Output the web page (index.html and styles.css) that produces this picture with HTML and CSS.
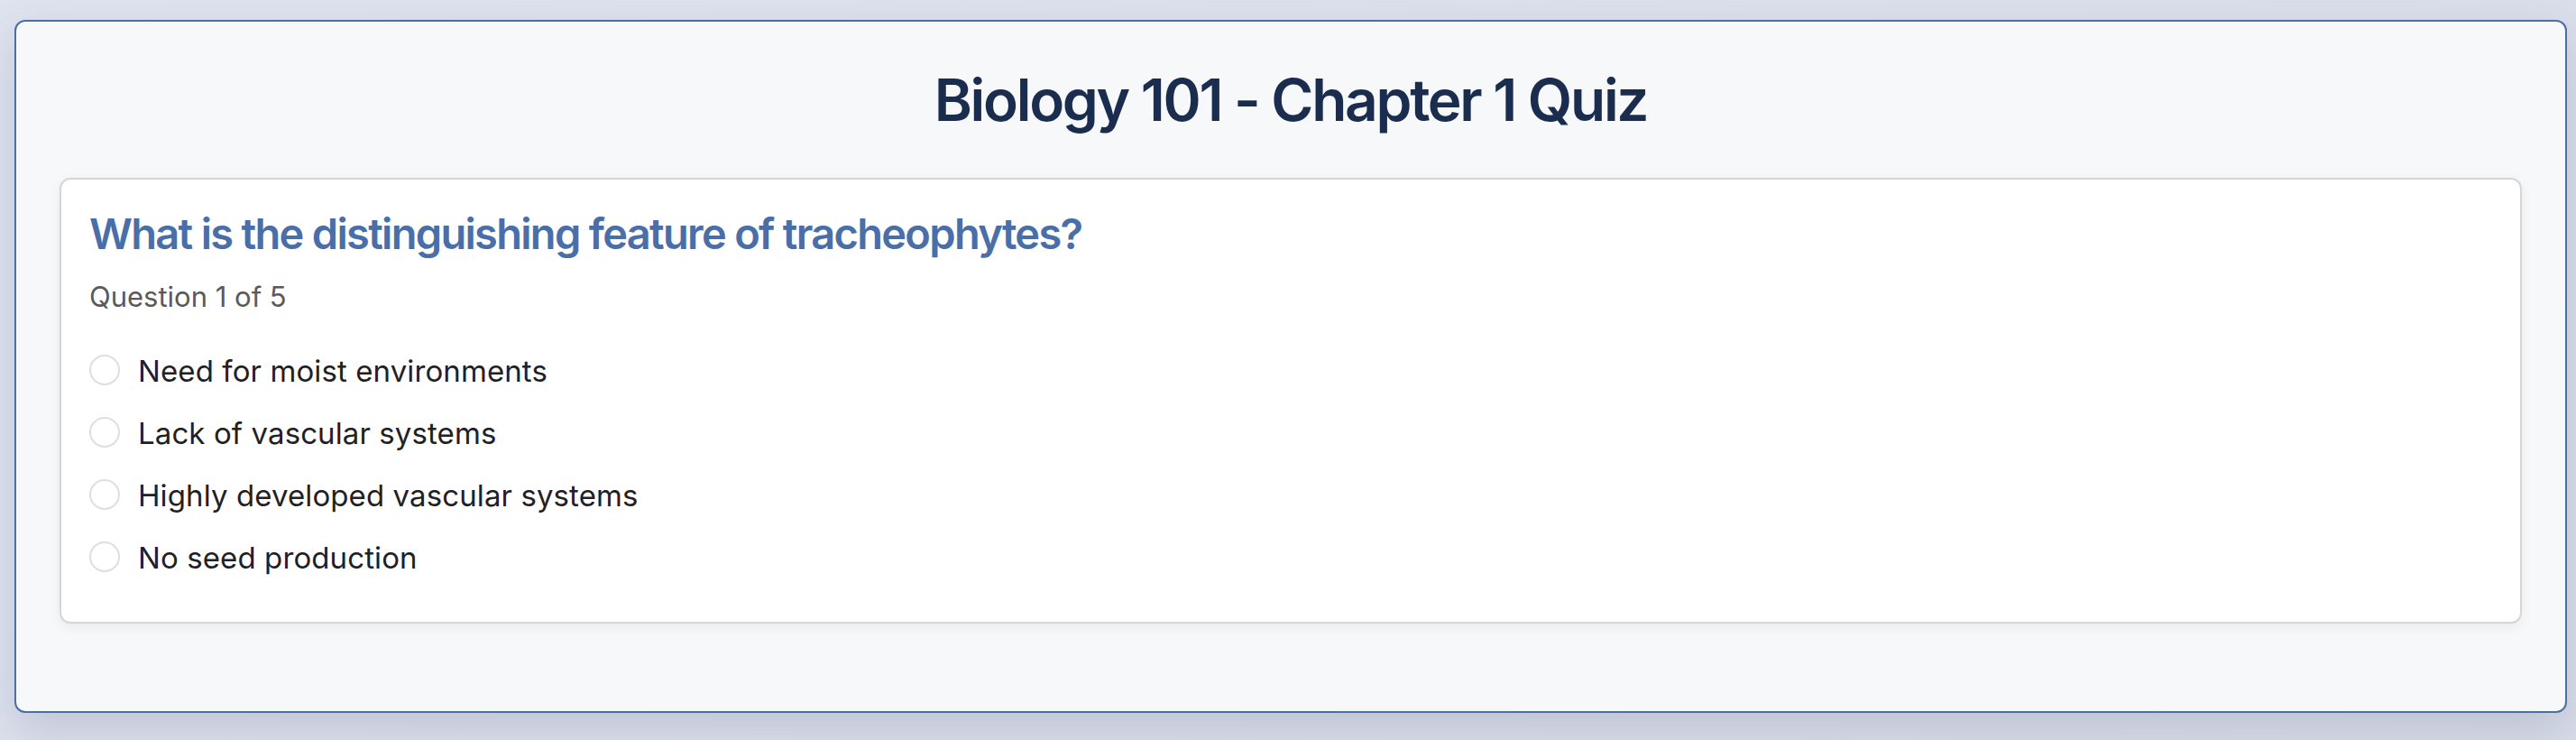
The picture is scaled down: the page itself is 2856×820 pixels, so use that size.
FILE: index.html
```html
<!DOCTYPE html>
<html lang="en">
<head>
<meta charset="utf-8">
<title>Biology 101 - Chapter 1 Quiz</title>
<link rel="stylesheet" href="styles.css">
</head>
<body>
  <main class="quiz">
    <h1 class="quiz-title">Biology 101 - Chapter 1 Quiz</h1>
    <section class="question-card">
      <h2 class="question-text">What is the distinguishing feature of tracheophytes?</h2>
      <p class="question-meta">Question 1 of 5</p>
      <ul class="options">
        <li class="option"><span class="radio"></span><span class="option-label">Need for moist environments</span></li>
        <li class="option"><span class="radio"></span><span class="option-label">Lack of vascular systems</span></li>
        <li class="option"><span class="radio"></span><span class="option-label">Highly developed vascular systems</span></li>
        <li class="option"><span class="radio"></span><span class="option-label">No seed production</span></li>
      </ul>
    </section>
  </main>
</body>
</html>
```

FILE: styles.css
```css
* { box-sizing: border-box; }

html, body {
  margin: 0;
  height: 100%;
}

body {
  background: linear-gradient(135deg, #dfe3ee 0%, #d9dde9 100%);
  font-family: Inter, "Noto Sans", "Liberation Sans", sans-serif;
  padding: 22px 10px 0 16px;
}

.quiz {
  background: #f7f8fa;
  border: 2px solid #4a6fa5;
  border-radius: 12px;
  padding: 48px 48px 97px;
  box-shadow: 0 20px 50px rgba(60, 70, 110, 0.18);
}

.quiz-title {
  margin: 0 0 48px;
  text-align: center;
  font-size: 64px;
  font-weight: 600;
  line-height: 77px;
  color: #1b2d4e;
  letter-spacing: -2.3px;
}

.question-card {
  background: #ffffff;
  border: 2px solid #d6d6d6;
  border-radius: 12px;
  padding: 31px 31px 36px;
  box-shadow: 0 4px 14px rgba(0, 0, 0, 0.06);
}

.question-text {
  margin: 0 0 23px;
  font-size: 47px;
  font-weight: 600;
  line-height: 58px;
  color: #4a6fa8;
  letter-spacing: -1.7px;
}

.question-meta {
  margin: 0;
  font-size: 31px;
  line-height: 36px;
  color: #5a5a5a;
  letter-spacing: 0;
}

.options {
  list-style: none;
  margin: 30px 0 0;
  padding: 0;
}

.option {
  display: flex;
  align-items: center;
  gap: 20px;
  padding: 16px 0;
  line-height: 37px;
  font-size: 33px;
  color: #1f2124;
  letter-spacing: 0.1px;
}

.radio {
  flex: none;
  width: 34px;
  height: 34px;
  border: 2px solid #dcdfe3;
  border-radius: 50%;
  background: #fff;
  margin-top: -3px;
}
```
